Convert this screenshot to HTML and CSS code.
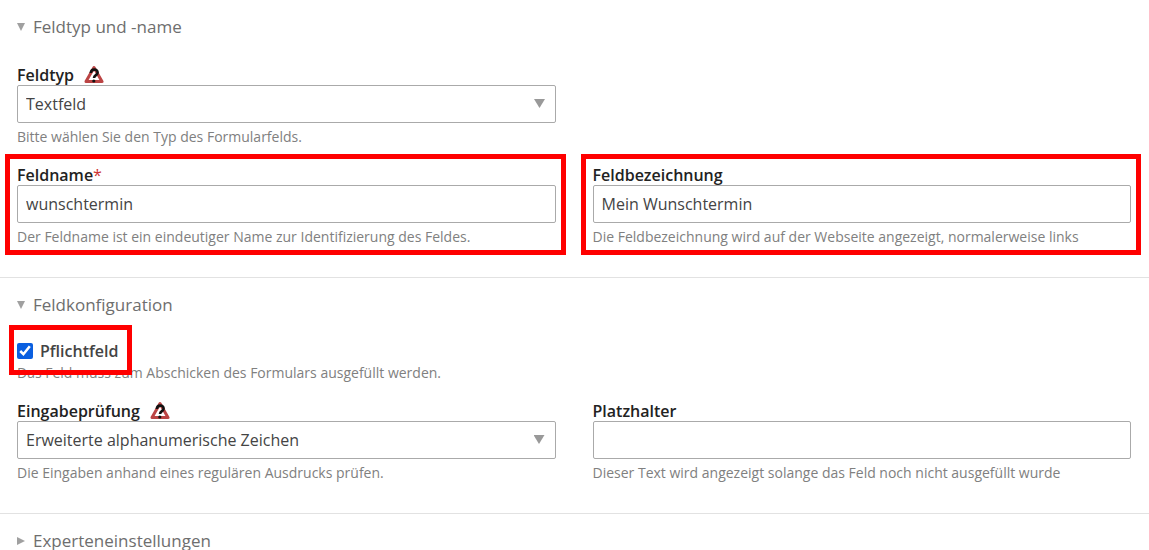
FILE: index.html
```
<!DOCTYPE html>
<html lang="de">
<head>
    <meta charset="UTF-8">
    <meta name="viewport" content="width=device-width, initial-scale=1.0">
    <title>Formularfeld bearbeiten</title>
    <link rel="stylesheet" href="styles.css">
</head>
<body>
<form>
    <!-- Feldtyp und -name -->
    <details class="section" open>
        <summary>Feldtyp und -name</summary>
        <div class="fields">
            <div class="field first">
                <div class="label-row">
                    <label for="type">Feldtyp</label>
                    <a href="#help" class="help" title="Hilfe" aria-label="Hilfe">
                        <svg width="20" height="20" viewBox="0 0 20 20">
                            <path d="M10 2.500 18 16.500H2Z" fill="#fff" stroke="#b44" stroke-width="3" stroke-linejoin="round"/>
                            <path d="M6.800 8C7 3.600 13.700 3.600 13.600 7.500 13.600 10.200 10.200 10 10 13" fill="none" stroke="#111" stroke-width="2.600"/>
                            <circle cx="9.800" cy="16" r="1.600" fill="#111"/>
                        </svg>
                    </a>
                </div>
                <div class="select">
                    <select id="type">
                        <option>Textfeld</option>
                    </select>
                </div>
                <p class="hint">Bitte wählen Sie den Typ des Formularfelds.</p>
            </div>
            <div class="field marked">
                <div class="label-row">
                    <label for="name">Feldname<span class="mandatory">*</span></label>
                </div>
                <input type="text" id="name" value="wunschtermin" required>
                <p class="hint">Der Feldname ist ein eindeutiger Name zur Identifizierung des Feldes.</p>
            </div>
            <div class="field marked">
                <div class="label-row">
                    <label for="label">Feldbezeichnung</label>
                </div>
                <input type="text" id="label" value="Mein Wunschtermin">
                <p class="hint">Die Feldbezeichnung wird auf der Webseite angezeigt, normalerweise links</p>
            </div>
        </div>
    </details>

    <!-- Feldkonfiguration -->
    <details class="section" open>
        <summary>Feldkonfiguration</summary>
        <div class="fields">
            <div class="field first">
                <div class="check marked">
                    <input type="checkbox" id="mandatory" checked>
                    <label for="mandatory">Pflichtfeld</label>
                </div>
                <p class="hint">Das Feld muss zum Abschicken des Formulars ausgefüllt werden.</p>
            </div>
            <div class="field">
                <div class="label-row">
                    <label for="rgxp">Eingabeprüfung</label>
                    <a href="#help" class="help" title="Hilfe" aria-label="Hilfe">
                        <svg width="20" height="20" viewBox="0 0 20 20">
                            <path d="M10 2.500 18 16.500H2Z" fill="#fff" stroke="#b44" stroke-width="3" stroke-linejoin="round"/>
                            <path d="M6.800 8C7 3.600 13.700 3.600 13.600 7.500 13.600 10.200 10.200 10 10 13" fill="none" stroke="#111" stroke-width="2.600"/>
                            <circle cx="9.800" cy="16" r="1.600" fill="#111"/>
                        </svg>
                    </a>
                </div>
                <div class="select">
                    <select id="rgxp">
                        <option>Erweiterte alphanumerische Zeichen</option>
                    </select>
                </div>
                <p class="hint">Die Eingaben anhand eines regulären Ausdrucks prüfen.</p>
            </div>
            <div class="field">
                <div class="label-row">
                    <label for="placeholder">Platzhalter</label>
                </div>
                <input type="text" id="placeholder">
                <p class="hint">Dieser Text wird angezeigt solange das Feld noch nicht ausgefüllt wurde</p>
            </div>
        </div>
    </details>

    <!-- Experteneinstellungen -->
    <details class="section">
        <summary>Experteneinstellungen</summary>
    </details>
</form>
</body>
</html>
```
FILE: styles.css
```
* {
    box-sizing: border-box;
}
body {
    margin: 0;
    background-color: #fff;
    color: #444;
    font-family: "Segoe UI", "Open Sans", sans-serif;
    font-size: 16px;
}
.section {
    padding: 15px 18px 30px 17px;
}
.section + .section {
    border-top: 1px solid #e2e2e2;
}
.section:last-child {
    padding-bottom: 0;
}
summary {
    display: flex;
    align-items: center;
    gap: 8px;
    height: 24px;
    line-height: 24px;
    color: #6e6e6e;
    font-size: 17px;
    cursor: pointer;
    list-style: none;
}
summary::before {
    content: "";
    width: 8px;
    height: 8px;
    background-color: #a0a0a0;
    clip-path: polygon(0 0, 100% 50%, 0 100%);
}
details[open] > summary::before {
    clip-path: polygon(0 0, 100% 0, 50% 100%);
}
.fields {
    display: grid;
    grid-template-columns: 1fr 1fr;
    gap: 18px 37px;
    margin-top: 26px;
}
.field {
    position: relative;
    min-width: 0;
}
.first {
    grid-column: 1 / -1;
    width: calc(50% - 18px);
}
.label-row {
    display: flex;
    align-items: center;
    gap: 10px;
    height: 20px;
    line-height: 20px;
}
label {
    color: #222;
    font-weight: 600;
}
.mandatory {
    color: #c33;
    font-weight: 400;
}
.help,
.help svg {
    display: block;
}
input[type="text"],
select {
    display: block;
    width: 100%;
    height: 38px;
    padding: 0 8px;
    border: 1px solid #aaa;
    border-radius: 2px;
    background-color: #fff;
    color: #444;
    font: inherit;
    appearance: none;
}
.select {
    position: relative;
}
.select::after {
    content: "";
    position: absolute;
    top: 14px;
    right: 11px;
    width: 11px;
    height: 9px;
    background-color: #999;
    clip-path: polygon(0 0, 100% 0, 50% 100%);
    pointer-events: none;
}
.hint {
    margin: 4px 0 0;
    color: #808080;
    font-size: 14px;
    line-height: 20px;
    white-space: nowrap;
}
.check {
    display: flex;
    align-items: center;
    gap: 7px;
    position: relative;
    width: fit-content;
    height: 16px;
}
.check input {
    width: 16px;
    height: 16px;
    margin: 0;
    accent-color: #0a5fe0;
}
.check label {
    color: #444;
}
/* rote Markierungen */
.marked::after {
    content: "";
    position: absolute;
    inset: -11px -10px -8px -12px;
    border: 5px solid #f00;
    pointer-events: none;
}
.check.marked::after {
    inset: -18px -14px -16px -8px;
}
```
